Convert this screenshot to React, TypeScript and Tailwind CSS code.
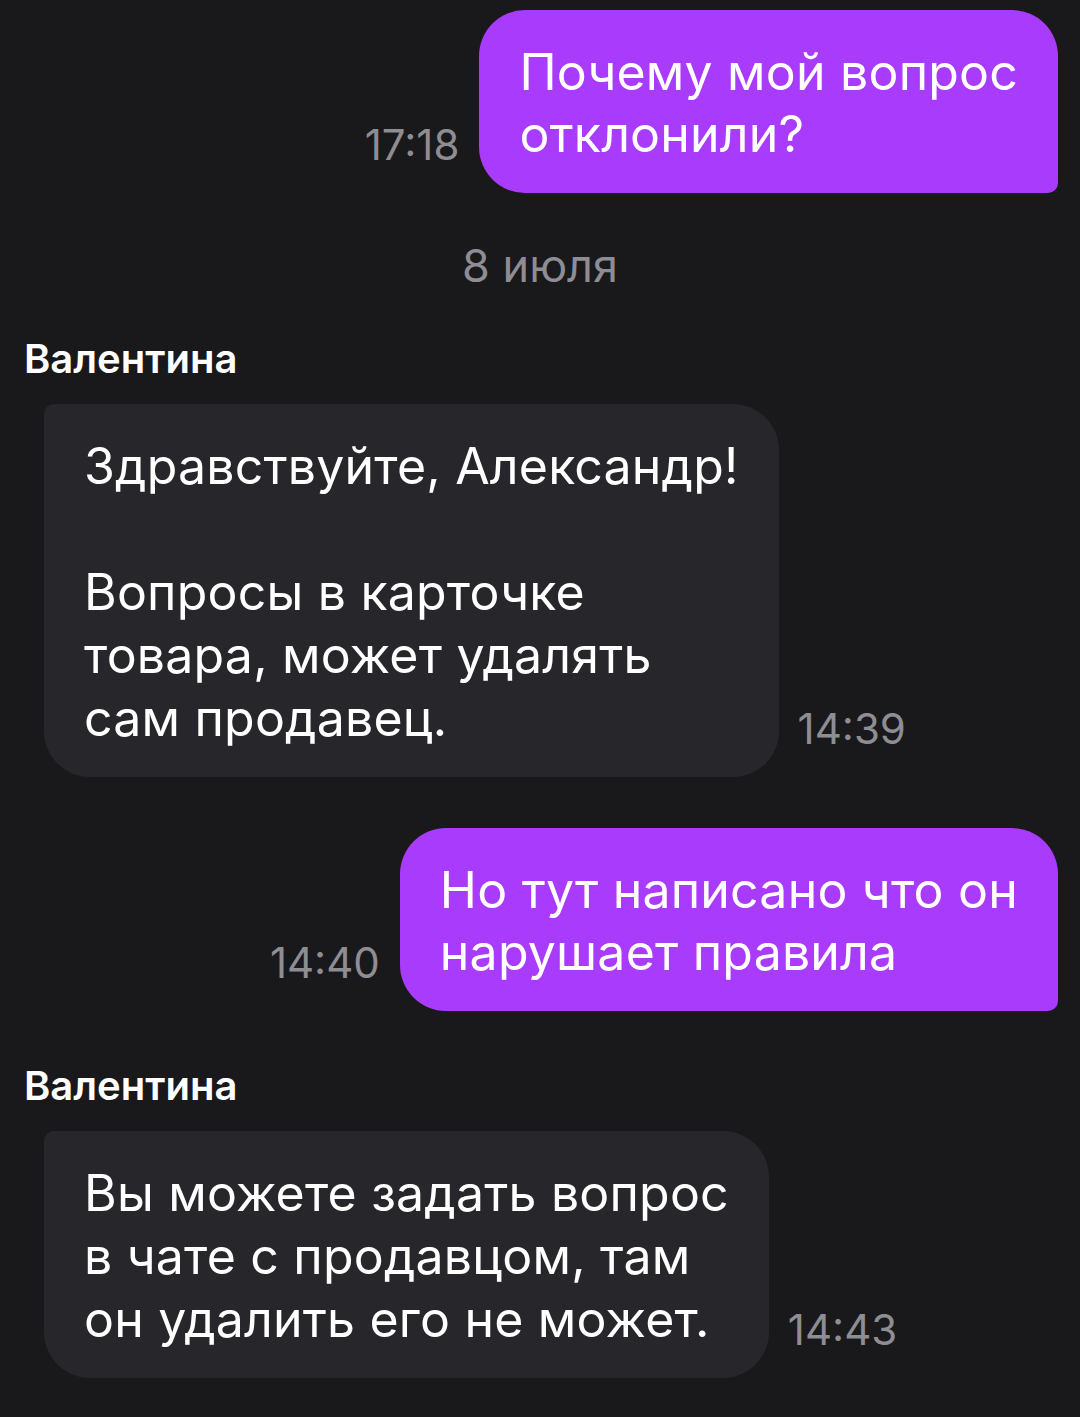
import React from "react";

const font = { fontFamily: "Inter, 'Noto Sans', sans-serif" };

function Time({ t }: { t: string }) {
  return (
    <div className="text-[42px] leading-[44px] text-[#8e8d93] mb-[26px] whitespace-nowrap">{t}</div>
  );
}

function Out({ lines, time }: { lines: string[]; time: string }) {
  return (
    <div className="flex justify-end items-end gap-[20px] pr-[22px]">
      <Time t={time} />
      <div className="bg-[#a93bfd] text-white rounded-[46px] rounded-br-[10px] px-[40px] pt-[31px] pb-[28px] text-[50px] leading-[62px] tracking-[0.2px] whitespace-nowrap">
        {lines.map((l, i) => (
          <div key={i}>{l}</div>
        ))}
      </div>
    </div>
  );
}

function In({ lines, time }: { lines: string[]; time: string }) {
  return (
    <div className="flex justify-start items-end gap-[19px] pl-[44px]">
      <div className="bg-[#27262b] text-white rounded-[46px] rounded-tl-[10px] px-[40px] pt-[31px] pb-[27px] text-[50px] leading-[63px] tracking-[0.2px] whitespace-nowrap">
        {lines.map((l, i) => (
          <div key={i} className="min-h-[63px]">{l}</div>
        ))}
      </div>
      <Time t={time} />
    </div>
  );
}

export default function App() {
  return (
    <div className="w-[1080px] h-[1417px] bg-[#19191b] overflow-hidden pt-[10px]" style={font}>
      <Out lines={["Почему мой вопрос", "отклонили?"]} time="17:18" />
      <div className="text-center text-[45px] leading-[46px] text-[#8e8d93] mt-[50px]">8 июля</div>
      <div className="text-white font-semibold text-[40px] leading-[44px] pl-[24px] mt-[48px]">Валентина</div>
      <div className="mt-[23px]">
        <In lines={["Здравствуйте, Александр!", "", "Вопросы в карточке", "товара, может удалять", "сам продавец."]} time="14:39" />
      </div>
      <div className="mt-[51px]">
        <Out lines={["Но тут написано что он", "нарушает правила"]} time="14:40" />
      </div>
      <div className="text-white font-semibold text-[40px] leading-[44px] pl-[24px] mt-[53px]">Валентина</div>
      <div className="mt-[23px]">
        <In lines={["Вы можете задать вопрос", "в чате с продавцом, там", "он удалить его не может."]} time="14:43" />
      </div>
    </div>
  );
}
